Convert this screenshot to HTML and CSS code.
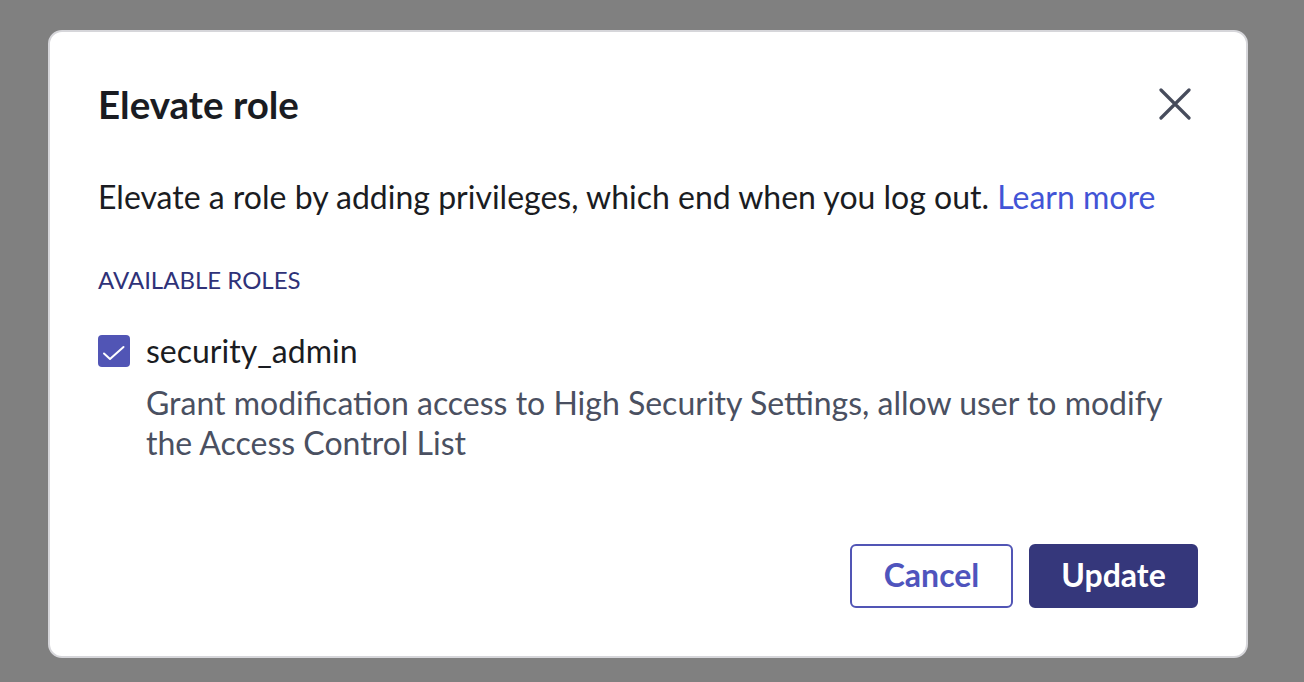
FILE: index.html
```html
<!DOCTYPE html>
<html lang="en">
<head>
<meta charset="utf-8">
<title>Elevate role</title>
<link rel="stylesheet" href="styles.css">
</head>
<body>
<div class="dialog" role="dialog" aria-labelledby="dlg-title">
  <div class="dialog-header">
    <h2 id="dlg-title" class="dialog-title">Elevate role</h2>
    <button class="close-btn" aria-label="Close">
      <svg width="32" height="32" viewBox="0 0 32 32" fill="none" stroke="#474c5c" stroke-width="3.2" stroke-linecap="round"><path d="M2 2L30 30M30 2L2 30"/></svg>
    </button>
  </div>
  <p class="intro">Elevate a role by adding privileges, which end when you log out. <a class="link" href="#">Learn more</a></p>
  <div class="section-label">AVAILABLE ROLES</div>
  <div class="role">
    <span class="checkbox">
      <svg width="32" height="32" viewBox="0 0 32 32" fill="none" stroke="#fff" stroke-width="2" stroke-linecap="round" stroke-linejoin="round"><path d="M6 18.5L12 24L25.5 12"/></svg>
    </span>
    <div class="role-text">
      <div class="role-name">security_admin</div>
      <div class="role-desc">Grant modification access to High Security Settings, allow user to modify the Access Control List</div>
    </div>
  </div>
  <div class="dialog-footer">
    <button class="btn btn-secondary">Cancel</button>
    <button class="btn btn-primary">Update</button>
  </div>
</div>
</body>
</html>
```
FILE: styles.css
```css
html, body {
  margin: 0;
  padding: 0;
}
body {
  background: #808080;
  font-family: Lato, "Open Sans", sans-serif;
  height: 682px;
  overflow: hidden;
}
.dialog {
  box-sizing: border-box;
  width: 1200px;
  height: 628px;
  margin: 30px 0 0 48px;
  background: #fff;
  border: 2px solid #d6d6da;
  border-radius: 14px;
  padding: 0 48px;
  display: flex;
  flex-direction: column;
}
.dialog-header {
  display: flex;
  align-items: center;
  justify-content: space-between;
  padding-top: 50px;
}
.dialog-title {
  margin: 0;
  font-size: 38.5px;
  font-weight: 700;
  color: #1a1c22;
  line-height: 44px;
}
.close-btn {
  border: 0;
  background: none;
  padding: 0;
  margin-right: 7px;
  width: 32px;
  height: 32px;
  display: flex;
}
.intro {
  margin: 53px 0 0;
  font-size: 32px;
  line-height: 36px;
  color: #1a1c22;
}
.link {
  color: #4254d6;
  text-decoration: none;
}
.section-label {
  margin-top: 51px;
  font-size: 24px;
  line-height: 28px;
  color: #2f3278;
}
.role {
  display: flex;
  gap: 16px;
  margin-top: 39px;
}
.checkbox {
  flex: none;
  width: 32px;
  height: 32px;
  border-radius: 4px;
  background: #5155b5;
  display: flex;
  margin-top: 2px;
}
.role-name {
  font-size: 32px;
  line-height: 36px;
  color: #1a1c22;
}
.role-desc {
  margin-top: 14px;
  font-size: 32px;
  line-height: 40px;
  color: #4a5061;
}
.dialog-footer {
  margin-top: auto;
  margin-bottom: 48px;
  display: flex;
  justify-content: flex-end;
  gap: 16px;
}
.btn {
  box-sizing: border-box;
  height: 64px;
  border-radius: 6px;
  font-family: Lato, "Open Sans", sans-serif;
  font-size: 32px;
  font-weight: 700;
  padding: 0 0 3px;
}
.btn-secondary {
  background: #fff;
  border: 2px solid #5155b5;
  color: #4f54bd;
  width: 163px;
}
.btn-primary {
  background: #35377b;
  border: 2px solid #35377b;
  color: #fff;
  width: 169px;
}
```
